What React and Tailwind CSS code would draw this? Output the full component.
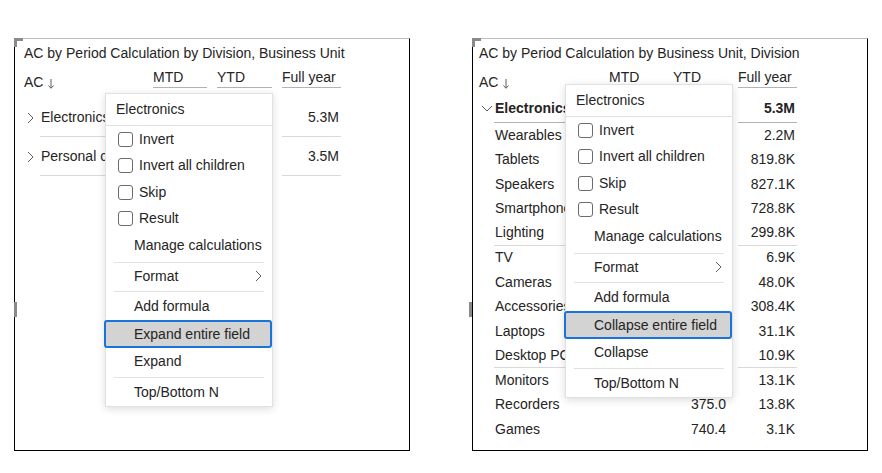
import clsx from "clsx";

const ChevronRight = ({ className = "" }) => (
  <svg width="7" height="12" viewBox="0 0 7 12" className={className}>
    <polyline points="1,1 6,6 1,11" fill="none" stroke="#605e5c" strokeWidth="1" />
  </svg>
);

const ChevronDown = () => (
  <svg width="12" height="7" viewBox="0 0 12 7">
    <polyline points="1,1 6,6 11,1" fill="none" stroke="#605e5c" strokeWidth="1" />
  </svg>
);

const SortArrow = () => (
  <svg width="6" height="10" viewBox="0 0 6 10" className="ml-[5px] mt-[3px]">
    <line x1="3" y1="0" x2="3" y2="9" stroke="#605e5c" strokeWidth="1" />
    <polyline points="0.5,6.5 3,9.3 5.5,6.5" fill="none" stroke="#605e5c" strokeWidth="1" />
  </svg>
);

const Menu = ({ verb, className }) => {
  return (
    <div
      className={clsx(
        "absolute w-[168px] border border-[#e1e1e1] bg-white shadow-[0_2px_8px_rgba(0,0,0,0.14)]",
        className
      )}
    >
      <div className="flex h-[32px] items-center border-b border-[#e1e1e1] pl-[10px]">Electronics</div>
      {["Invert", "Invert all children", "Skip", "Result"].map((t) => (
        <div key={t} className="flex h-[26.5px] items-center gap-[6px] pl-[12px]">
          <span className="h-[15px] w-[15px] rounded-[3px] border border-[#6b6b6b]" />
          {t}
        </div>
      ))}
      <div className="flex h-[27px] items-center pl-[28px]">Manage calculations</div>
      <div className="mx-[8px] mt-[3px] h-px bg-[#e1e1e1]" />
      <div className="flex h-[26px] items-center justify-between pl-[28px] pr-[10px]">
        Format
        <ChevronRight />
      </div>
      <div className="mx-[8px] mt-[2px] h-px bg-[#e1e1e1]" />
      <div className="flex h-[28px] items-center pl-[28px]">Add formula</div>
      <div className="-ml-[2px] flex h-[28px] items-center rounded-[3px] border-2 border-[#1a73d9] bg-[#d3d3d3] pl-[28px]">
        {verb} entire field
      </div>
      <div className="flex h-[27px] items-center pl-[28px]">{verb}</div>
      <div className="mx-[8px] mt-[2px] h-px bg-[#e1e1e1]" />
      <div className="flex h-[28px] items-center pl-[28px]">Top/Bottom N</div>
    </div>
  );
};

const Panel = ({ handle, className, children }) => (
  <div
    className={clsx(
      "relative h-[413px] w-[396px] shrink-0 border border-black border-t-[#bdbdbd] pt-[4px]",
      className
    )}
  >
    <div className="absolute -left-px -top-px h-[3px] w-[9px] bg-[#8a8a8a]" />
    <div className="absolute -left-px -top-px h-[9px] w-[3px] bg-[#8a8a8a]" />
    <div className={clsx("absolute top-[263px] h-[15px] w-[3px] bg-[#8a8a8a]", handle)} />
    {children}
  </div>
);

const Header = ({ labelW }) => (
  <div className="flex h-[25px] gap-[10px]">
    <div className={clsx("flex h-[29px] items-start pt-[9px]", labelW)}>
      <span className="flex h-[20px] items-center">
        AC
        <SortArrow />
      </span>
    </div>
    {[
      ["w-[54px]", "MTD"],
      ["w-[55px]", "YTD"],
      ["w-[59px]", "Full year"],
    ].map(([w, t]) => (
      <div key={t} className={clsx("flex h-full items-end border-b border-[#b3b3b3]", w)}>
        <span className="leading-[20px]">{t}</span>
      </div>
    ))}
  </div>
);

const leftRows = [
  { label: "Electronics", full: "5.3M" },
  { label: "Personal care", full: "3.5M" },
];

// ytd values sit under the menu except for the last two rows
const rightRows = [
  ["Wearables", "", "2.2M"],
  ["Tablets", "", "819.8K"],
  ["Speakers", "", "827.1K"],
  ["Smartphones", "", "728.8K"],
  ["Lighting", "", "299.8K", true],
  ["TV", "", "6.9K"],
  ["Cameras", "", "48.0K"],
  ["Accessories", "", "308.4K"],
  ["Laptops", "", "31.1K"],
  ["Desktop PC", "", "10.9K", true],
  ["Monitors", "", "13.1K"],
  ["Recorders", "375.0", "13.8K"],
  ["Games", "740.4", "3.1K"],
];

export default function App() {
  return (
    <div className="flex min-h-screen gap-[62px] bg-white pl-[14px] pt-[38px] font-['Liberation_Sans',Arial,sans-serif] text-[14px] text-[#252423]">
      <Panel handle="-left-px" className="pl-[9px]">
        <div className="h-[20px] whitespace-nowrap leading-[20px]">
          AC by Period Calculation by Division, Business Unit
        </div>
        <Header labelW="w-[119px]" />
        <div className="mt-[11px]">
          {leftRows.map((r, i) => (
            <div key={r.label} className={clsx("flex gap-[10px]", i === 0 ? "h-[38px]" : "h-[39px]")}>
              <div className="flex w-[119px]">
                <div className="flex w-[16px] items-center pl-[3px]">
                  <ChevronRight />
                </div>
                <div className="flex flex-1 items-center overflow-hidden whitespace-nowrap border-b border-[#d9d9d9] pl-px">
                  {r.label}
                </div>
              </div>
              <div className="w-[54px] border-b border-[#d9d9d9]" />
              <div className="w-[55px] border-b border-[#d9d9d9]" />
              <div className="flex w-[59px] items-center justify-end border-b border-[#d9d9d9] pr-[2px]">{r.full}</div>
            </div>
          ))}
        </div>
        <Menu verb="Expand" className="left-[90px] top-[54px]" />
      </Panel>

      <Panel handle="-left-[4px]" className="pl-[6px]">
        <div className="h-[20px] whitespace-nowrap leading-[20px]">
          AC by Period Calculation by Business Unit, Division
        </div>
        <Header labelW="w-[120px]" />
        <div className="flex h-[35px] gap-[10px] font-bold">
          <div className="flex w-[120px]">
            <div className="flex w-[15px] items-end pb-[11px] pl-[2px]">
              <ChevronDown />
            </div>
            <div className="flex flex-1 items-end overflow-hidden whitespace-nowrap border-b border-[#b3b3b3] pb-[3px] pl-px">
              Electronics
            </div>
          </div>
          <div className="w-[54px] border-b border-[#b3b3b3]" />
          <div className="w-[55px] border-b border-[#b3b3b3]" />
          <div className="flex w-[59px] items-end justify-end border-b border-[#b3b3b3] pb-[3px] pr-[2px]">5.3M</div>
        </div>
        {rightRows.map(([label, ytd, full, line]) => (
          <div key={label} className="flex h-[24.5px] gap-[10px]">
            <div className="flex w-[120px] pl-[15px]">
              <div
                className={clsx(
                  "flex flex-1 items-center overflow-hidden whitespace-nowrap pl-px",
                  line && "border-b border-[#d9d9d9]"
                )}
              >
                {label}
              </div>
            </div>
            <div className={clsx("w-[54px]", line && "border-b border-[#d9d9d9]")} />
            <div
              className={clsx(
                "flex w-[55px] items-center justify-end pr-[2px]",
                line && "border-b border-[#d9d9d9]"
              )}
            >
              {ytd}
            </div>
            <div
              className={clsx(
                "flex w-[59px] items-center justify-end pr-[2px]",
                line && "border-b border-[#d9d9d9]"
              )}
            >
              {full}
            </div>
          </div>
        ))}
        <Menu verb="Collapse" className="left-[92px] top-[45px]" />
      </Panel>
    </div>
  );
}
